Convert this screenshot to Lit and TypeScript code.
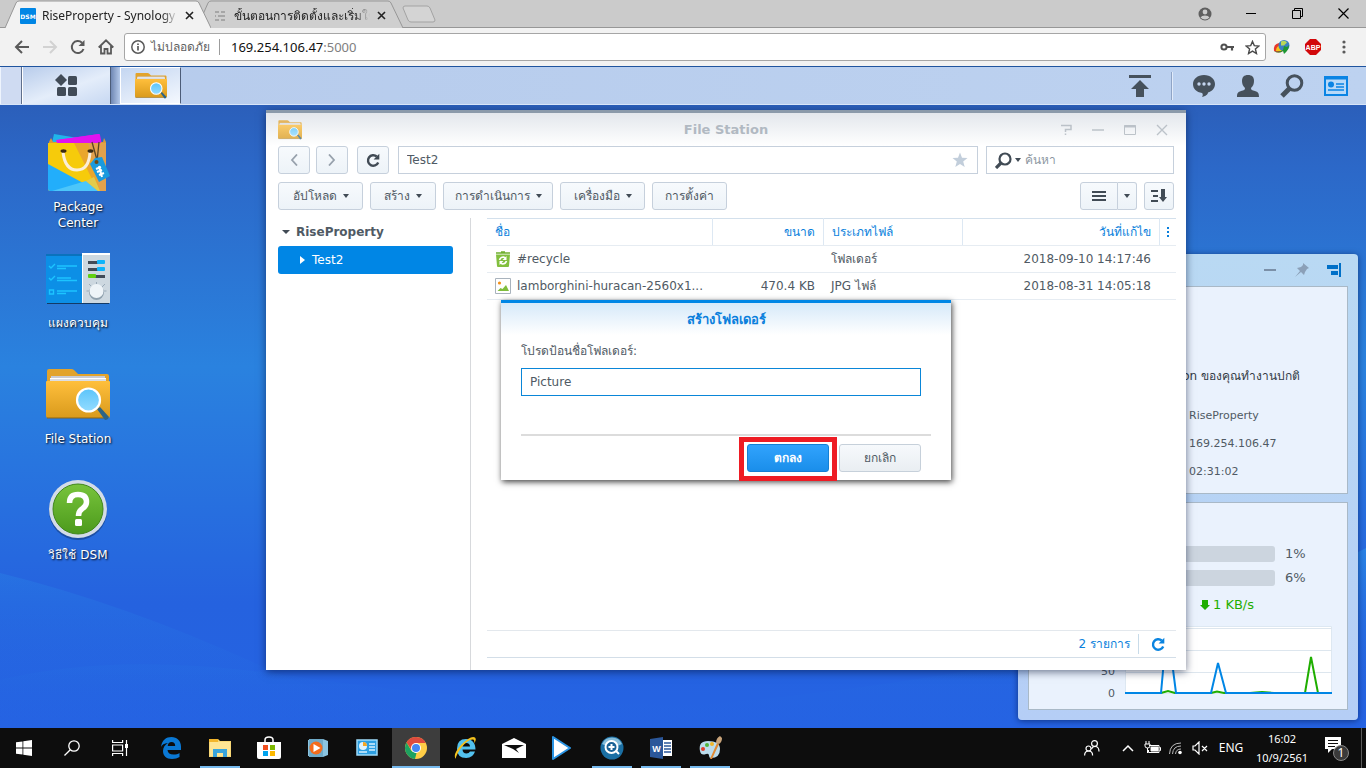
import { LitElement, html, css, svg } from "lit";
import { customElement } from "lit/decorators.js";
import { classMap } from "lit/directives/class-map.js";

const base = css`
  :host { display: block; box-sizing: border-box; font-family: "DejaVu Sans", Verdana, sans-serif; font-size: 12px; line-height: 16px; color: #505a64; }
  *, *::before, *::after { box-sizing: border-box; }
  button, input { font: inherit; color: inherit; margin: 0; }
  button { padding: 0; border: 0; background: none; display: flex; align-items: center; justify-content: center; }
  h1, h2, p, ul, dl, dd { margin: 0; padding: 0; }
  svg { display: block; flex: none; }
`;

const folder = (w: number, h: number) => svg`
  <svg width=${w} height=${h} viewBox="0 0 64 52" aria-hidden="true">
    <defs>
      <linearGradient id="ff" x1="0" y1="0" x2="0" y2="1"><stop offset="0" stop-color="#ffbf3c"/><stop offset="1" stop-color="#d99a1c"/></linearGradient>
      <linearGradient id="fl" x1="0" y1="0" x2="0" y2="1"><stop offset="0" stop-color="#5cc4fa"/><stop offset="1" stop-color="#93dcff"/></linearGradient>
    </defs>
    <path d="M1 2q0-2 2-2h22q2 0 3 1l4 4h29q2 0 2 2v14H1z" fill="#e2a32c"/>
    <path d="M5 7h54v7H5z" fill="#c9cbd3"/><path d="M4 9h56v5H4z" fill="#fff"/><path d="M4 10.500h56v1H4z" fill="#b9bcc6"/>
    <path d="M0 13q0-1 1-1h62q1 0 1 1v34q0 2-2 2H2q-2 0-2-2z" fill="url(#ff)"/>
    <path d="M1 49h61" stroke="#8b6414" stroke-width="1"/>
    <path d="M51 40l3-2 9 10q-1 3-4 3z" fill="#2d6485"/>
    <circle cx="42.500" cy="31" r="11.500" fill="url(#fl)" stroke="#fff" stroke-width="2.200"/>
  </svg>`;

const reload = (s: number, color: string) => svg`
  <svg width=${s} height=${s} viewBox="0 0 16 16" fill="none" stroke=${color} stroke-width="2.400" aria-hidden="true">
    <path d="M13.200 10.500A5.300 5.300 0 1 1 11.800 4.500"/><path d="M14.300 1.800v5.700H8.600z" fill=${color} stroke="none"/>
  </svg>`;

const caret = svg`<svg width="6" height="4" viewBox="0 0 6 4" aria-hidden="true"><path d="M0 0h6L3 4z" fill="#414b55"/></svg>`;

@customElement("browser-chrome")
class BrowserChrome extends LitElement {
  static styles = [base, css`
    :host { font-family: "Noto Sans", "Open Sans", sans-serif; color: #222; }
    .strip { display: flex; align-items: stretch; height: 28px; background: #cbcbcb; border-bottom: 1px solid #979797; padding-left: 5px; }
    .tab { position: relative; isolation: isolate; width: 206px; height: 28px; display: flex; align-items: center; gap: 6px; padding: 3px 16px 0 15px; margin-right: -14px; }
    .tab.on { z-index: 1; }
    .shape { position: absolute; inset: 0; width: 100%; height: 100%; z-index: -1; }
    .name { flex: 1; min-width: 0; overflow: hidden; white-space: nowrap; -webkit-mask-image: linear-gradient(90deg, #000 88%, transparent); }
    .new { margin: 0 auto 0 12px; }
    .win { width: 46px; }
    .bar { display: flex; align-items: center; height: 38px; background: #f2f2f2; padding: 0 7px 0 8px; }
    .nav { width: 28px; height: 28px; }
    .omni { flex: 1; margin-left: 4px; height: 28px; display: flex; align-items: center; gap: 5px; padding: 0 3px 0 5px; background: #fff; border: 1px solid #a6a6a6; border-radius: 3px; }
    .safe { color: #5f5f5f; white-space: nowrap; }
    .rule { width: 1px; height: 16px; background: #9c9c9c; margin: 0 6px 0 4px; }
    .url { flex: 1; font-size: 13px; color: #111; }
    .port { color: #808080; }
    .omni button { width: 20px; }
    .ext { width: 31px; height: 28px; }
  `];

  tab(on: boolean, icon: unknown, name: string) {
    return html`<div class=${classMap({ tab: true, on })} role="tab">
      <svg class="shape" viewBox="0 0 206 28" preserveAspectRatio="none"><path d="M0 28L11 3q1-2 3-2h177q2 0 3 2l12 25" fill=${on ? "#f2f2f2" : "#cfcfcf"} stroke="#979797"/></svg>
      ${icon}<span class="name">${name}</span>
      <button aria-label="ปิดแท็บ"><svg width="11" height="11" viewBox="0 0 11 11"><path d="M2 2l7 7M9 2l-7 7" stroke="#222" stroke-width="1.600"/></svg></button>
    </div>`;
  }

  render() {
    return html`
      <div class="strip">
        ${this.tab(true, svg`<svg width="16" height="16" viewBox="0 0 16 16"><rect width="16" height="16" rx="1" fill="#0086e5"/><text x="8" y="11" text-anchor="middle" font-family="DejaVu Sans" font-size="6" font-weight="bold" fill="#fff">DSM</text></svg>`, "RiseProperty - Synology DiskStation")}
        ${this.tab(false, svg`<svg width="16" height="16" viewBox="0 0 16 16" stroke="#a6a6a6" stroke-width="2"><path d="M3 4h4M9 4h4M3 8h1M6 8h7M3 12h4M9 12h4"/></svg>`, "ขั้นตอนการติดตั้งและเริ่มใช้งาน Synology")}
        <button class="new" aria-label="แท็บใหม่"><svg width="36" height="20" viewBox="0 0 36 20"><path d="M4 2h22q2 0 3 2l5 12q0 2-2 2H10q-2 0-3-2L2 4q0-2 2-2z" fill="#d4d4d4" stroke="#a3a3a3"/></svg></button>
        <button class="win" aria-label="โปรไฟล์"><svg width="14" height="14" viewBox="0 0 14 14"><circle cx="7" cy="7" r="6.500" fill="#5f5f5f"/><circle cx="7" cy="5" r="2.400" fill="#cbcbcb"/><path d="M2.500 10.500q1-2 4.500-2t4.500 2q-2 2-4.500 2t-4.500-2z" fill="#cbcbcb"/></svg></button>
        <button class="win" aria-label="ย่อ"><svg width="10" height="10" viewBox="0 0 10 10"><path d="M0 4.500h10" stroke="#000"/></svg></button>
        <button class="win" aria-label="คืนค่า"><svg width="11" height="11" viewBox="0 0 11 11" fill="none" stroke="#000"><path d="M.5 2.500h8v8h-8zM2.500 2.500v-2h8v8h-2"/></svg></button>
        <button class="win" aria-label="ปิด"><svg width="11" height="11" viewBox="0 0 11 11" stroke="#000" stroke-width="1.200"><path d="M.5.5l10 10M10.500.5l-10 10"/></svg></button>
      </div>
      <div class="bar">
        <button class="nav" aria-label="ย้อนกลับ"><svg width="16" height="16" viewBox="0 0 16 16" fill="none" stroke="#5a5a5a" stroke-width="2"><path d="M15 8H2M8 2L2 8l6 6"/></svg></button>
        <button class="nav" aria-label="ไปข้างหน้า"><svg width="16" height="16" viewBox="0 0 16 16" fill="none" stroke="#d2d2d2" stroke-width="2"><path d="M1 8h13M8 2l6 6-6 6"/></svg></button>
        <button class="nav" aria-label="โหลดซ้ำ"><svg width="16" height="16" viewBox="0 0 16 16"><path d="M13.500 10A6 6 0 1 1 12 3.700" fill="none" stroke="#5a5a5a" stroke-width="2"/><path d="M14.500 1v6H8.500z" fill="#5a5a5a"/></svg></button>
        <button class="nav" aria-label="หน้าแรก"><svg width="16" height="16" viewBox="0 0 16 16" fill="none" stroke="#5a5a5a" stroke-width="1.800"><path d="M.7 8.500L8 1.300l7.300 7.200M3 7v7.500h3.500V10h3v4.500H13V7"/></svg></button>
        <div class="omni">
          <svg width="16" height="16" viewBox="0 0 16 16"><circle cx="8" cy="8" r="6.200" fill="none" stroke="#5a5a5a" stroke-width="1.500"/><path d="M8 7v4.500M8 4.500v1.500" stroke="#5a5a5a" stroke-width="1.700"/></svg>
          <span class="safe">ไม่ปลอดภัย</span><span class="rule"></span>
          <span class="url">169.254.106.47<span class="port">:5000</span></span>
          <button aria-label="รหัสผ่าน"><svg width="15" height="10" viewBox="0 0 15 10"><circle cx="4" cy="5" r="2.600" fill="none" stroke="#505050" stroke-width="2"/><path d="M6 5h8M12 5v3.500" stroke="#505050" stroke-width="2.200"/></svg></button>
          <button aria-label="บุ๊กมาร์ก"><svg width="15" height="15" viewBox="0 0 16 16"><path d="M8 1.500l1.900 4.500 4.900.4-3.700 3.200 1.100 4.800L8 11.800l-4.200 2.600 1.100-4.800L1.200 6.400 6.100 6z" fill="none" stroke="#4a4a4a" stroke-width="1.500"/></svg></button>
        </div>
        <button class="ext" aria-label="IDM"><svg width="18" height="16" viewBox="0 0 18 16"><path d="M1 12Q0 5 6 4l4 8q-4 3-9 0z" fill="#e8392c"/><path d="M3 12q0-5 5-6l2 6z" fill="#f6c519"/><circle cx="11" cy="6.500" r="5.500" fill="#3a7fc4"/><path d="M8 2.500q4-2 6 1l-3 3-3 0z" fill="#b8d75a"/><path d="M1 12q4 2 9-1l1-4 3 1 2-2q0 5-5 9l-1-3q-5 3-9 0z" fill="#1d9632"/></svg></button>
        <button class="ext" aria-label="ABP"><svg width="16" height="16" viewBox="0 0 16 16"><path d="M5 0h6l5 5v6l-5 5H5l-5-5V5z" fill="#d2080a"/><text x="8" y="10.500" text-anchor="middle" font-family="Liberation Sans" font-size="7" font-weight="bold" fill="#fff">ABP</text></svg></button>
        <button class="ext" aria-label="เมนู"><svg width="4" height="14" viewBox="0 0 4 14" fill="#5a5a5a"><circle cx="2" cy="2" r="1.600"/><circle cx="2" cy="7" r="1.600"/><circle cx="2" cy="12" r="1.600"/></svg></button>
      </div>`;
  }
}

@customElement("dsm-bar")
class DsmBar extends LitElement {
  static styles = [base, css`
    :host { display: flex; height: 39px; background: linear-gradient(90deg, #b6cbec, #bdd2f0); border-top: 1px solid #1f549f; border-bottom: 1px solid #d8e5f8; position: relative; z-index: 1; }
    .edge { width: 22px; background: #cfdbf2; border-left: 1px solid #eef4fd; border-right: 1px solid #5f6f8c; }
    .menu { width: 89px; background: linear-gradient(160deg, #b8cceb, #e4edfa 55%, #c7d8f2); border-left: 1px solid #fff; border-right: 1px solid #4c5c78; padding-right: 2px; }
    .gap { width: 9px; background: linear-gradient(90deg, #7088b4, #b4c9ea); }
    .app { width: 61px; background: linear-gradient(160deg, #c4d6f1, #f4f8fe); border: 1px solid #fff; border-right: 1px solid #4c5c78; }
    .tools { margin-left: auto; display: flex; align-items: center; padding-right: 8px; }
    .tools button { width: 44px; height: 36px; }
    .rule { width: 2px; height: 28px; margin: 0 9px; background: #8fa4c6; border-right: 1px solid #e1ebfa; }
  `];
  render() {
    const c = "#46515c";
    return html`
      <div class="edge"></div>
      <button class="menu" aria-label="เมนูหลัก"><svg width="24" height="24" viewBox="0 0 24 24" fill="#414b57"><path d="M7 0l6 6-6 6-6-6z"/><rect x="14" y="2" width="9" height="9" rx="1.500"/><rect x="3" y="13" width="9" height="9" rx="1.500"/><rect x="14" y="13" width="9" height="9" rx="1.500"/></svg></button>
      <div class="gap"></div>
      <button class="app" aria-label="File Station">${folder(32, 26)}</button>
      <div class="tools">
        <button aria-label="อัปโหลด"><svg width="22" height="22" viewBox="0 0 22 22" fill=${c}><path d="M0 0h22v3H0zM11 5l9 9h-5v8H7v-8H2z"/></svg></button>
        <span class="rule"></span>
        <button aria-label="การแจ้งเตือน"><svg width="24" height="24" viewBox="0 0 24 24"><path d="M12 1c6.500 0 11 4 11 9 0 4-3 7.500-7 8.500 0 2-3 4-6 4.500 1-1.500 1-3 0-4C4.500 18 1 15 1 10 1 5 5.500 1 12 1z" fill=${c}/><circle cx="7" cy="10" r="1.700" fill="#c4d5ee"/><circle cx="12" cy="10" r="1.700" fill="#c4d5ee"/><circle cx="17" cy="10" r="1.700" fill="#c4d5ee"/></svg></button>
        <button aria-label="ผู้ใช้"><svg width="24" height="24" viewBox="0 0 24 24"><path d="M12 1c4 0 6 2 6 6 0 3-1 5-3 7 0 2 1 2 4 3 3 1 4 2 4 6H1c0-4 1-5 4-6 3-1 4-1 4-3-2-2-3-4-3-7 0-4 2-6 6-6z" fill=${c}/></svg></button>
        <button aria-label="ค้นหา"><svg width="24" height="24" viewBox="0 0 24 24" fill="none" stroke=${c}><circle cx="14.500" cy="9" r="7.300" stroke-width="3"/><path d="M9.500 14.500L2 22" stroke-width="5"/></svg></button>
        <button aria-label="วิดเจ็ต"><svg width="24" height="20" viewBox="0 0 24 20"><path d="M1 1h22v18H1z" fill="#b8d9f8" stroke="#0a84e4" stroke-width="2"/><path d="M1 1h22v2H1z" fill="#0a84e4" stroke="#0a84e4"/><circle cx="7" cy="8.500" r="3" fill="#0a84e4"/><path d="M4 14h16M12 8h8M12 11h8" stroke="#0a84e4" stroke-width="1.600"/></svg></button>
      </div>`;
  }
}

@customElement("health-widget")
class HealthWidget extends LitElement {
  static styles = [base, css`
    :host { background: linear-gradient(180deg, #b9d9f3, #b5cef6); border-radius: 4px; box-shadow: 0 1px 6px rgba(0, 20, 70, .6); padding: 0 10px 10px; display: flex; flex-direction: column; }
    .head { display: flex; justify-content: flex-end; align-items: center; height: 32px; gap: 8px; padding-right: 2px; }
    .head button { width: 24px; height: 24px; }
    .panel { background: #eaf2fd; border: 1px solid #a9b9c7; flex: 1; min-height: 0; }
    .panel + .panel { margin-top: 8px; }
    .state { display: flex; padding: 81px 0 0; color: #333c46; }
    .state span { width: 172px; text-align: right; white-space: pre; }
    .facts { padding: 18px 0 0 160px; font-size: 11px; line-height: 28px; }
    .load { padding: 43px 0 0 72px; display: grid; grid-template-columns: 1fr 62px; row-gap: 8px; column-gap: 10px; align-items: center; }
    .track { height: 16px; background: #ccd5df; border-radius: 3px; overflow: hidden; }
    .used { height: 100%; background: #1d9bf0; }
    .pct { font-size: 13px; }
    .net { display: flex; align-items: center; gap: 3px; padding: 10px 0 0 171px; color: #1fae00; font-size: 13px; line-height: 18px; }
    .chart { display: flex; gap: 10px; padding: 12px 15px 0 0; }
    .axis { width: 86px; display: flex; flex-direction: column; justify-content: flex-end; text-align: right; font-size: 11px; line-height: 22px; height: 79px; }
    .plot { flex: 1; height: 68px; }
  `];
  render() {
    return html`
      <div class="head">
        <button aria-label="ย่อ"><svg width="12" height="12" viewBox="0 0 12 12"><path d="M0 6h12" stroke="#7b90a8" stroke-width="2"/></svg></button>
        <button aria-label="ปักหมุด"><svg width="14" height="14" viewBox="0 0 14 14" fill="#8ba0b8"><path d="M8 0l6 5-2 1-2 3-1 3-3-3-6 5 5-6-3-3 4-1 2-2z"/></svg></button>
        <button aria-label="แถบด้านข้าง"><svg width="14" height="14" viewBox="0 0 14 14" fill="#0070c8"><path d="M0 2h11v4H0zM4 8h7v4H4zM12 0h2v14h-2z"/></svg></button>
      </div>
      <section class="panel">
        <p class="state"><span>DiskStation </span>ของคุณทำงานปกติ</p>
        <div class="facts"><p>RiseProperty</p><p>169.254.106.47</p><p>02:31:02</p></div>
      </section>
      <section class="panel">
        <div class="load">
          ${[1, 6].map((v) => html`<div class="track"><div class="used" style="width:${v}%"></div></div><span class="pct">${v}%</span>`)}
        </div>
        <p class="net"><svg width="10" height="10" viewBox="0 0 10 10" fill="#1fae00"><path d="M2 0h6v5h2l-5 5-5-5h2z"/></svg>1 KB/s</p>
        <div class="chart">
          <div class="axis"><span>50</span><span>0</span></div>
          <svg class="plot" viewBox="0 0 207 68" preserveAspectRatio="none">
            <path d="M.5.5h206v67H.5z" fill="#fff" stroke="#dde8f2"/><path d="M0 2.500h207M0 24.500h207M0 46.500h207" stroke="#dde6ee"/>
            <g fill="none" stroke-width="2"><path d="M0 67h36l7-2 7 2h36l6-1.500 7 1.500h26l12-1 12 1h31l6-36 7 36h14" stroke="#1fae00"/><path d="M0 67h36l5-55h3l7 55h35l7-30 8 30h106" stroke="#0086e5"/></g>
          </svg>
        </div>
      </section>`;
  }
}

@customElement("file-window")
class FileWindow extends LitElement {
  static styles = [base, css`
    :host { background: #fff; border-top: 3px solid #8b9aaa; display: flex; flex-direction: column; box-shadow: 0 2px 8px rgba(0, 15, 50, .55); }
    .title { display: grid; grid-template-columns: 152px 1fr 152px; align-items: center; height: 33px; padding: 0 12px; background: linear-gradient(#e3e7ec, #fff); }
    .title h1 { font-size: 13px; text-align: center; color: #b1b9c2; font-weight: bold; }
    .title svg { opacity: .75; }
    .wins { display: flex; gap: 8px; justify-content: flex-end; }
    .wins button { width: 24px; height: 24px; }
    .row { display: flex; padding: 0 12px; height: 28px; margin-bottom: 8px; }
    .btn { border: 1px solid #c6d0dc; border-radius: 3px; background: linear-gradient(#f7fafd, #edf3f8); height: 28px; min-width: 32px; gap: 6px; white-space: nowrap; }
    .go { gap: 6px; display: flex; }
    .go + .btn { margin: 0 9px; }
    .path { flex: 1; border: 1px solid #c6d0dc; display: flex; align-items: center; padding: 0 9px 0 8px; min-width: 0; }
    input { border: 0; outline: 0; background: none; padding: 0; flex: 1; min-width: 0; }
    .find { width: 188px; margin-left: 8px; border: 1px solid #c6d0dc; display: flex; align-items: center; gap: 3px; padding: 0 8px; }
    .find svg + svg { margin-right: 1px; }
    .find input::placeholder { color: #8d97a2; opacity: 1; }
    .acts { gap: 7px; }
    .up { width: 85px; } .mk { width: 66px; } .op { width: 110px; } .tl { width: 85px; } .st { width: 75px; }
    .view { margin-left: auto; display: flex; }
    .view .btn:first-child { width: 38px; border-radius: 3px 0 0 3px; }
    .view .btn:last-child { min-width: 19px; border-left: 0; border-radius: 0 3px 3px 0; }
    .sort { width: 30px; min-width: 30px; }
    .body { flex: 1; display: flex; min-height: 0; }
    .tree { width: 205px; border-right: 1px solid #d7d9dc; padding: 0 17px 0 12px; list-style: none; }
    .node { height: 28px; display: flex; align-items: center; gap: 6px; border-radius: 3px; padding-left: 4px; }
    .root { font-weight: bold; }
    .kid { background: #0086e5; color: #fff; padding-left: 22px; gap: 7px; }
    .list { flex: 1; display: flex; flex-direction: column; padding: 0 10px 12px 16px; }
    table { width: 100%; border-collapse: collapse; table-layout: fixed; }
    th, td { height: 27px; padding: 0 8px; text-align: left; border-bottom: 1px solid #e6ecf2; white-space: nowrap; overflow: hidden; line-height: 16px; }
    th { color: #0a7fdc; font-weight: normal; border-top: 1px solid #d3e0ec; border-right: 1px solid #dde8f3; }
    th:last-child { border-right: 0; padding: 0 6px; }
    .n { width: 225px; } .s { width: 111px; } .t { width: 139px; } .m { width: 17px; }
    .r { text-align: right; }
    .file { display: flex; align-items: center; gap: 6px; }
    .foot { margin-top: auto; height: 28px; border-top: 1px solid #e3e8ed; border-bottom: 1px solid #d3dee8; display: flex; align-items: center; justify-content: flex-end; color: #0a7fdc; }
    .foot button { height: 20px; width: 38px; border-left: 1px solid #c8dbe9; margin-left: 8px; }
  `];
  render() {
    const g = "#aab2ba";
    const d = "#414b55";
    const recycle = svg`<svg width="16" height="16" viewBox="0 0 16 16"><path d="M1 2h14M6 1h4" stroke="#6fae2e" stroke-width="1.500"/><path d="M1 3.500h14L14 15q0 1-1 1H3q-1 0-1-1z" fill="#82bf3e"/><path d="M4.500 9q1-3 4-3l2 1M11.500 10q-1 3-4 3l-2-1" fill="none" stroke="#fff" stroke-width="1.600"/><path d="M11.500 5v4h-4zM4.500 14v-4h4z" fill="#fff"/></svg>`;
    const pic = svg`<svg width="16" height="16" viewBox="0 0 16 16"><path d="M.5.5h15v15H.5z" fill="#fff" stroke="#a9b3bd"/><circle cx="4.500" cy="5" r="1.600" fill="#f39019"/><path d="M2.500 13l3-3 2 1L11 7l3 6z" fill="#7fbd3c"/></svg>`;
    const rows = [
      [recycle, "#recycle", "", "โฟลเดอร์", "2018-09-10 14:17:46"],
      [pic, "lamborghini-huracan-2560x1...", "470.4 KB", "JPG ไฟล์", "2018-08-31 14:05:18"],
    ];
    return html`
      <div class="title">
        ${folder(24, 20)}<h1>File Station</h1>
        <div class="wins">
          <button aria-label="ช่วยเหลือ"><svg width="12" height="12" viewBox="0 0 12 12" fill="none" stroke=${g} stroke-width="1.500"><path d="M1 1.500h10v4H5.500V8M5.500 9.500v1.500"/></svg></button>
          <button aria-label="ย่อ"><svg width="12" height="12" viewBox="0 0 12 12"><path d="M0 6h12" stroke=${g} stroke-width="1.500"/></svg></button>
          <button aria-label="ขยาย"><svg width="12" height="12" viewBox="0 0 12 12" fill="none" stroke=${g}><path d="M.5 1.500h11v9H.5z"/><path d="M0 2.500h12" stroke-width="2"/></svg></button>
          <button aria-label="ปิด"><svg width="12" height="12" viewBox="0 0 12 12"><path d="M1 1l10 10M11 1L1 11" stroke=${g} stroke-width="1.400"/></svg></button>
        </div>
      </div>
      <div class="row">
        <div class="go">
          <button class="btn" aria-label="ย้อนกลับ"><svg width="8" height="12" viewBox="0 0 8 12"><path d="M7 .5L2 6l5 5.500" fill="none" stroke="#97a1ac" stroke-width="1.800"/></svg></button>
          <button class="btn" aria-label="ถัดไป"><svg width="8" height="12" viewBox="0 0 8 12"><path d="M1 .5L6 6l-5 5.500" fill="none" stroke="#97a1ac" stroke-width="1.800"/></svg></button>
        </div>
        <button class="btn" aria-label="รีเฟรช">${reload(16, d)}</button>
        <div class="path"><input aria-label="เส้นทาง" .value=${"Test2"}><svg width="16" height="16" viewBox="0 0 16 16"><path d="M8 .5l2 5.200 5.500.3-4.300 3.500 1.500 5.500L8 12l-4.700 3 1.500-5.500L.5 6 6 5.700z" fill="#c2cedb"/></svg></div>
        <div class="find"><svg width="17" height="17" viewBox="0 0 17 17" fill="none" stroke=${d}><circle cx="10" cy="7" r="5.500" stroke-width="2.200"/><path d="M6 11l-5 5" stroke-width="3.200"/></svg>${caret}<input aria-label="ค้นหา" placeholder="ค้นหา"></div>
      </div>
      <div class="row acts">
        <button class="btn up">อัปโหลด ${caret}</button><button class="btn mk">สร้าง ${caret}</button><button class="btn op">การดำเนินการ ${caret}</button><button class="btn tl">เครื่องมือ ${caret}</button><button class="btn st">การตั้งค่า</button>
        <div class="view">
          <button class="btn" aria-label="มุมมองรายการ"><svg width="14" height="12" viewBox="0 0 14 12"><path d="M0 2h14M0 6h14M0 10h14" stroke=${d} stroke-width="2"/></svg></button>
          <button class="btn" aria-label="ตัวเลือกมุมมอง">${caret}</button>
        </div>
        <button class="btn sort" aria-label="เรียงลำดับ"><svg width="16" height="14" viewBox="0 0 16 14" fill=${d}><path d="M0 1h7v2H0zM2 6h5v2H2zM0 11h7v2H0zM10 0h4v8h2l-4 5-4-5h2z"/></svg></button>
      </div>
      <div class="body">
        <ul class="tree">
          <li class="node root"><svg width="8" height="4" viewBox="0 0 8 4"><path d="M0 0h8L4 4z" fill=${d}/></svg>RiseProperty</li>
          <li class="node kid"><svg width="5" height="8" viewBox="0 0 5 8"><path d="M0 0v8l5-4z" fill="#fff"/></svg>Test2</li>
        </ul>
        <div class="list">
          <table>
            <thead><tr><th class="n">ชื่อ</th><th class="s r">ขนาด</th><th class="t">ประเภทไฟล์</th><th class="r">วันที่แก้ไข</th><th class="m" aria-label="คอลัมน์"><svg width="4" height="10" viewBox="0 0 4 10" fill="#0a7fdc"><path d="M1 0h2v2H1zM1 4h2v2H1zM1 8h2v2H1z"/></svg></th></tr></thead>
            <tbody>${rows.map((r) => html`<tr><td><div class="file">${r[0]}<span>${r[1]}</span></div></td><td class="r">${r[2]}</td><td>${r[3]}</td><td class="r">${r[4]}</td><td></td></tr>`)}</tbody>
          </table>
          <div class="foot"><span>2 รายการ</span><button aria-label="รีเฟรช">${reload(16, "#0a84e0")}</button></div>
        </div>
      </div>`;
  }
}

@customElement("folder-dialog")
class FolderDialog extends LitElement {
  static styles = [base, css`
    :host { background: linear-gradient(#d6e9f9, #fff 32px); border-top: 3px solid #0086e5; box-shadow: 1px 2px 6px rgba(0, 0, 0, .75); display: flex; flex-direction: column; padding: 0 20px 8px; }
    h2 { font-size: 13px; line-height: 16px; padding: 9px 0 15px; text-align: center; color: #0a7fdc; }
    label { display: block; line-height: 16px; margin-bottom: 9px; }
    input { width: calc(100% - 10px); height: 28px; border: 1px solid #0a86d8; outline: 0; padding: 0 8px; background: #fff; }
    .acts { margin-top: auto; border-top: 2px solid #dcdcdc; padding: 8px 10px 0 0; display: flex; justify-content: flex-end; gap: 10px; }
    .acts button { width: 82px; height: 28px; border: 1px solid #c6d0da; border-radius: 3px; background: linear-gradient(#f6f9fc, #e9eef2); }
    .acts .ok { position: relative; background: linear-gradient(#31a3fd, #1a8eea); border-color: #1480d4; color: #fff; font-weight: bold; }
    .mark { position: absolute; inset: -8px -9px -10px -9px; border: 5px solid #ee1c24; }
  `];
  render() {
    return html`<h2>สร้างโฟลเดอร์</h2>
      <label for="name">โปรดป้อนชื่อโฟลเดอร์:</label><input id="name" .value=${"Picture"}>
      <div class="acts"><button class="ok">ตกลง<span class="mark"></span></button><button>ยกเลิก</button></div>`;
  }
}

@customElement("dsm-desktop")
class DsmDesktop extends LitElement {
  static styles = [base, css`
    :host { position: relative; overflow: hidden; background: linear-gradient(180deg, #2b5fba 0, #2c68c8 10%, #2a82df 42%, #2562df 80%, #2563e3 100%); }
    .waves { position: absolute; inset: 0; width: 100%; height: 100%; }
    .icons { position: relative; width: 108px; margin-left: 24px; padding-top: 26px; display: flex; flex-direction: column; }
    .icon { height: 116px; text-decoration: none; color: #fff; text-align: center; text-shadow: 1px 1px 2px #000; display: flex; flex-direction: column; align-items: center; gap: 4px; padding: 0 20px; }
    .pic { height: 64px; display: flex; align-items: center; }
    .wide { white-space: nowrap; }
    .health { position: absolute; left: 1018px; top: 149px; width: 340px; height: 466px; }
    .files { position: absolute; left: 266px; top: 5px; width: 920px; height: 560px; }
    .dialog { position: absolute; left: 501px; top: 195px; width: 450px; height: 180px; }
  `];
  render() {
    const bag = svg`<svg width="64" height="62" viewBox="0 0 64 62"><path d="M8 2l30 5v8H5z" fill="#20b5ea"/><path d="M12 8l41-6q1 0 1 1l2 10H12z" fill="#e012f0"/><path d="M3 10l2-4 2 4h50l1-4 2 4v3H3z" fill="#d99b38"/><path d="M10 8l43-6 2 9H11z" fill="#e012f0"/><path d="M2 11h58v46q0 2-2 2H4q-2 0-2-2z" fill="#f6cb0b"/><path d="M28 11h32v48h-8z" fill="#eaa62c"/><path d="M42 11h18v48h-6z" fill="#e3a14c"/><path d="M2 32l50 27H4q-2 0-2-2z" fill="#22aefb"/><path d="M6 59l34-10 12 10z" fill="#4cc6fa"/><path d="M40 49l8-4 6 14h-2z" fill="#e2cb4c"/><path d="M17 20q2 18 14 18t13-18" fill="none" stroke="#fbeed8" stroke-width="3"/><ellipse cx="17.500" cy="19" rx="3" ry="1.800" fill="#3b2a10"/><ellipse cx="44.500" cy="19" rx="3" ry="1.800" fill="#3b2a10"/><path d="M46 10l5 18M53 10l-2 20" stroke="#5a4523" stroke-width="1.300" fill="none"/><path d="M44 32l5-6 7-1 8 19-11 6z" fill="#1a9ade"/><circle cx="50.500" cy="30" r="2" fill="#6b4a18"/><path d="M50 37l5-2M51 40l5-2M53 43l5-2M53 34l3 11" stroke="#fff" stroke-width="2"/></svg>`;
    const panel = svg`<svg width="64" height="52" viewBox="0 0 64 52"><path d="M0 2h36v48H0z" fill="#0c8fe6"/><path d="M0 1h36v2H0z" fill="#0a72bd"/><path d="M36 1h28v49H36z" fill="#cdd8e0"/><path d="M36 0h28v2H36zM36 1h1v49h-1z" fill="#fff"/><path d="M1 50.500h62" stroke="#143a66"/><g stroke="#1cc4ff" stroke-width="1.400" fill="none"><path d="M3 13l2 2 4-4M3 25l2 2 4-4M3.500 37h4v4h-4zM11 13h20M11 15.500h9M11 25h14M11 27.500h20M11 38h20M11 40.500h9"/></g><path d="M42 8h10v3H42zM42 15h10v3H42zM49 22h10v3H49z" fill="#414b57"/><rect x="51" y="7" width="8" height="4" rx="1" fill="#0fb5fb"/><rect x="51" y="14" width="8" height="4" rx="1" fill="#0fb5fb"/><rect x="42" y="21" width="8" height="4" rx="1" fill="#61cf13"/><path d="M40.500 38h20M50.500 29v10M43 31l8 8 8-8" stroke="#9aabb9" fill="none"/><circle cx="50.500" cy="39.500" r="7.500" fill="#8fa0ad"/><circle cx="50.500" cy="38" r="7" fill="#eef4f8"/></svg>`;
    const help = svg`<svg width="60" height="62" viewBox="0 0 60 62"><defs><linearGradient id="hg" x1="0" y1="0" x2="0" y2="1"><stop offset="0" stop-color="#78c43c"/><stop offset="1" stop-color="#4c9a1c"/></linearGradient></defs><circle cx="30" cy="31" r="29" fill="#1c4fa4"/><circle cx="30" cy="29" r="29" fill="#d3dce7"/><circle cx="30" cy="29" r="25" fill="url(#hg)" stroke="#3f861a"/><path d="M21.500 23q0-8.500 8.500-8.500t8.500 7.500q0 4-4 6.500t-4 7.500" fill="none" stroke="#fff" stroke-width="5.500"/><rect x="27" y="39" width="7" height="7" rx="1.500" fill="#fff"/></svg>`;
    return html`
      <svg class="waves" viewBox="0 0 1366 623" preserveAspectRatio="none" aria-hidden="true">
        <defs>
          <linearGradient id="w2" x1="0" y1="0" x2="0" y2="1"><stop offset="0" stop-color="#2b92ea" stop-opacity=".75"/><stop offset="1" stop-color="#2463e0" stop-opacity="0"/></linearGradient>
        </defs>
        <path d="M0 468Q130 500 270 565T620 623H0z" fill="url(#w2)" opacity=".35"/>
        <path d="M0 623V575Q120 545 300 572T700 600Q1150 560 1366 443V623z" fill="url(#w2)" opacity=".85"/>
      </svg>
      <nav class="icons">
        <a class="icon" href="#package"><span class="pic">${bag}</span>Package Center</a>
        <a class="icon wide" href="#control"><span class="pic">${panel}</span>แผงควบคุม</a>
        <a class="icon wide" href="#files"><span class="pic">${folder(64, 52)}</span>File Station</a>
        <a class="icon wide" href="#help"><span class="pic">${help}</span>วิธีใช้ DSM</a>
      </nav>
      <health-widget class="health"></health-widget>
      <file-window class="files"></file-window>
      <folder-dialog class="dialog"></folder-dialog>`;
  }
}

@customElement("task-bar")
class TaskBar extends LitElement {
  static styles = [base, css`
    :host { display: flex; height: 40px; background: #0d0d0d; color: #fff; font-family: "Noto Sans", "Open Sans", sans-serif; }
    .sys { display: flex; margin-right: 3px; }
    .apps { display: flex; gap: 1px; }
    .slot { width: 48px; height: 40px; position: relative; }
    .run::after { content: ""; position: absolute; left: 4px; right: 4px; bottom: 0; height: 2px; background: #76b9ed; }
    .now { background: #3d3d3d; }
    .now::after { left: 0; right: 0; }
    .tray { margin-left: auto; display: flex; align-items: center; }
    .tray button { width: 24px; height: 40px; }
    .tray .people { width: 48px; }
    .tray .lang { width: 38px; }
    .tray .clock { width: 64px; flex-direction: column; line-height: 19px; font-size: 11px; }
    .tray .note { width: 48px; border-right: 1px solid #5a5a5a; margin-right: 4px; padding-right: 3px; }
  `];
  render() {
    const sys = [
      ["เริ่ม", svg`<svg width="16" height="16" viewBox="0 0 16 16" fill="#fff"><path d="M0 2.300L6.500 1.400v6.200H0zM7.300 1.300L16 0v7.600H7.300zM0 8.400h6.500v6.200L0 13.700zM7.300 8.400H16V16l-8.700-1.300z"/></svg>`],
      ["ค้นหา", svg`<svg width="16" height="16" viewBox="0 0 16 16" fill="none" stroke="#fff" stroke-width="1.300"><circle cx="10" cy="6" r="5.200"/><path d="M6.300 9.700L.5 15.500"/></svg>`],
      ["มุมมองงาน", svg`<svg width="16" height="16" viewBox="0 0 16 16" fill="none" stroke="#fff" stroke-width="1.200"><path d="M.6 0v2.500h10V0M.6 5h10v6H.6zM.6 16v-2.500h10V16M14.500 0v16"/><path d="M13 4h3v4h-3z" fill="#fff" stroke="none"/></svg>`],
    ];
    const apps: [string, string, unknown][] = [
      ["Edge", "", svg`<svg width="22" height="22" viewBox="0 0 22 22"><path d="M1 10C2 3 6 0 11.500 0 17 0 21 4 21 9.500V13H7.500c.3 3 2.500 4.500 6 4.500 2.500 0 4.500-.7 6-1.600V20c-2 1.300-4.500 2-7.500 2C6 22 3 18.500 3 14c0-3.500 2-6.500 5-8-4 .3-6 2-7 4zM7.700 9h7.500c0-2.700-1.300-4-3.700-4-2.200 0-3.500 1.500-3.800 4z" fill="#0a78d4"/></svg>`],
      ["Explorer", "run", svg`<svg width="22" height="20" viewBox="0 0 22 20"><path d="M0 1h9l2 2h11v16H0z" fill="#f8d775"/><path d="M1 4h20v14H1z" fill="#ffe594"/><path d="M0 1h9v3H0z" fill="#f3b52b"/><path d="M4 19v-8h14v8h-4v-4H8v4z" fill="#3aa5dc"/></svg>`],
      ["Store", "", svg`<svg width="24" height="24" viewBox="0 0 24 24"><path d="M8 7V4q0-3 4-3t4 3v3" fill="none" stroke="#fff" stroke-width="1.500"/><path d="M0 6h24v15q0 2-2 2H2q-2 0-2-2z" fill="#fff"/><path d="M6 9h5v5H6z" fill="#f04e1f"/><path d="M13 9h5v5h-5z" fill="#7cb800"/><path d="M6 15h5v5H6z" fill="#00a3ee"/><path d="M13 15h5v5h-5z" fill="#fdb900"/></svg>`],
      ["Media", "", svg`<svg width="20" height="20" viewBox="0 0 20 20"><path d="M0 2l14-1v18l-14-1zM15 1l5 2v14l-5 2z" fill="#8bc4e0"/><path d="M1 1h14v18H1z" fill="#6faac8"/><circle cx="8" cy="10" r="6.500" fill="#f36c1c"/><path d="M5.500 6v8l7-4z" fill="#fff"/></svg>`],
      ["แผงควบคุม", "", svg`<svg width="22" height="18" viewBox="0 0 22 18"><path d="M1 1h20v15H1z" fill="#2d9fe2" stroke="#9fdcfa" stroke-width="1.500"/><circle cx="7" cy="7" r="4" fill="#dff3ff"/><path d="M7 7V3a4 4 0 0 1 4 4z" fill="#f6a623"/><path d="M13 5h6M13 8h6M13 11h6M3 13h8" stroke="#d8f1ff" stroke-width="1.500"/></svg>`],
      ["Chrome", "run now", svg`<svg width="22" height="22" viewBox="0 0 22 22"><circle cx="11" cy="11" r="11" fill="#ffcd46"/><path d="M1.500 5.500A11 11 0 0 1 20.700 6H11L6.500 13z" fill="#dd4b3e"/><path d="M1.500 5.500l5 8.500 5 2L10 22A11 11 0 0 1 1.500 5.500z" fill="#1da261"/><circle cx="11" cy="11" r="5" fill="#fff"/><circle cx="11" cy="11" r="4" fill="#4387f4"/></svg>`],
      ["Internet Explorer", "", svg`<svg width="24" height="24" viewBox="0 0 24 24"><path fill-rule="evenodd" d="M13 3c6.500 0 9.500 4.500 9.500 10.500H9.500q.3 4 4 4 2.500 0 3.500-2h5q-2 6.500-8.800 6.500Q4 22 4 12.500 4 3 13 3zM9.500 10.500h7.500q-.2-3.500-3.600-3.500T9.500 10.500z" fill="#53c1ee"/><path d="M3 23Q-1 19 8 9 18-1 22 1.500q2 2-1 6 1-4-1-4Q15 3 8 12q-6 9-5 11z" fill="#f3c11e"/></svg>`],
      ["Mail", "", svg`<svg width="24" height="20" viewBox="0 0 24 20"><path d="M0 6l12-6 12 6v14H0z" fill="#fff"/><path d="M2 7h20l-8 4 3 4-6-4z" fill="#0d0d0d"/></svg>`],
      ["Player", "", svg`<svg width="24" height="24" viewBox="0 0 24 24"><path d="M2 1l17 11L2 23z" fill="#fff" stroke="#2a94e4" stroke-width="2" stroke-linejoin="round"/></svg>`],
      ["Search tool", "run", svg`<svg width="24" height="24" viewBox="0 0 24 24"><circle cx="12" cy="12" r="11.500" fill="#1b6fa3"/><path d="M2 8a11 11 0 0 1 20 0q-10 6-20 0z" fill="#84bcd9"/><circle cx="11.500" cy="11" r="6" fill="#1a6295" stroke="#fff" stroke-width="2"/><path d="M16 15l3 3M8.500 11h6M11.500 8v6" stroke="#fff" stroke-width="2"/></svg>`],
      ["Word", "run", svg`<svg width="22" height="22" viewBox="0 0 22 22"><path d="M12 3h10v16H12z" fill="#fff"/><path d="M14 6h7M14 9h7M14 12h7M14 15h7" stroke="#2b579a" stroke-width="1.300"/><path d="M0 2l13-2v22L0 20z" fill="#2b579a"/><text x="6.500" y="14.500" text-anchor="middle" font-family="Liberation Sans" font-size="9" font-weight="bold" fill="#fff">W</text></svg>`],
      ["Paint", "run", svg`<svg width="24" height="24" viewBox="0 0 24 24"><path d="M2 15Q0 5 10 5q12 0 12 8 0 9-9 9-2 0-2-2.500T8 18q-5 2-6-3z" fill="#bcdcec"/><circle cx="5" cy="13" r="2" fill="#e23c2a"/><circle cx="9" cy="9" r="2" fill="#52b43c"/><circle cx="14" cy="8" r="2" fill="#f0b52a"/><path d="M12 23L19 7l2 1-7 15z" fill="#e08a34"/><path d="M18 7q0-5 4-7l2 2q0 4-3 6z" fill="#c9a47a"/></svg>`],
    ];
    const w = "#fff";
    return html`
      <div class="sys">${sys.map((s) => html`<button class="slot" aria-label=${s[0]}>${s[1]}</button>`)}</div>
      <div class="apps">${apps.map(([n, c, i]) => html`<button class="slot ${c}" aria-label=${n}>${i}</button>`)}</div>
      <div class="tray">
        <button class="people" aria-label="บุคคล"><svg width="16" height="16" viewBox="0 0 16 16" fill="none" stroke=${w} stroke-width="1.200"><circle cx="4.500" cy="8.500" r="2.500"/><circle cx="10.500" cy="3.500" r="2.900"/><path d="M.6 15.500q0-4.500 4-4.500t4 4.500M7.500 9q1-2.500 3.500-2.500 4 0 4 5"/></svg></button>
        <button aria-label="ไอคอนที่ซ่อน"><svg width="12" height="8" viewBox="0 0 12 8"><path d="M1 7l5-5 5 5" fill="none" stroke=${w} stroke-width="1.500"/></svg></button>
        <button aria-label="แบตเตอรี่"><svg width="17" height="14" viewBox="0 0 17 14" fill="none" stroke=${w}><path d="M5 4.500h10v7H4.500V9M15.500 6.500h1v3h-1M1 3h5v2q0 2-2.500 2T1 5zM2 0v3M5 0v3M3.500 7v5"/><path d="M7 6h7v4H7z" fill=${w}/></svg></button>
        <button aria-label="เครือข่าย"><svg width="14" height="14" viewBox="0 0 14 14" fill="none" stroke="#bbb"><path d="M.5 13Q1 2 12 2M3.500 13Q4 5 12 5M6.500 13Q7 8 12 8"/><circle cx="11" cy="11.500" r="1.800" fill=${w} stroke="none"/></svg></button>
        <button aria-label="เสียง"><svg width="16" height="14" viewBox="0 0 16 14" fill="none" stroke=${w} stroke-width="1.200"><path d="M1 5h2l4-4v12L3 9H1zM10 5l5 5M15 5l-5 5"/></svg></button>
        <button class="lang">ENG</button>
        <button class="clock"><span>16:02</span><span>10/9/2561</span></button>
        <button class="note" aria-label="การแจ้งเตือน"><svg width="26" height="26" viewBox="0 0 26 26"><path d="M2 2h16v12H9l-4 4v-4H2z" fill=${w}/><path d="M5 5.500h10M5 8.500h10M5 11.500h7" stroke="#0d0d0d"/><circle cx="18" cy="18" r="7.500" fill="#3a3a3a" stroke="#888"/><text x="18" y="22" text-anchor="middle" font-family="Noto Sans" font-size="12" fill="#fff">1</text></svg></button>
      </div>`;
  }
}

@customElement("app-root")
class AppRoot extends LitElement {
  static styles = css`
    :host { display: flex; flex-direction: column; height: 100vh; overflow: hidden; }
    .desk { flex: 1; min-height: 0; }
  `;
  render() {
    return html`<browser-chrome></browser-chrome><dsm-bar></dsm-bar><dsm-desktop class="desk"></dsm-desktop><task-bar></task-bar>`;
  }
}
